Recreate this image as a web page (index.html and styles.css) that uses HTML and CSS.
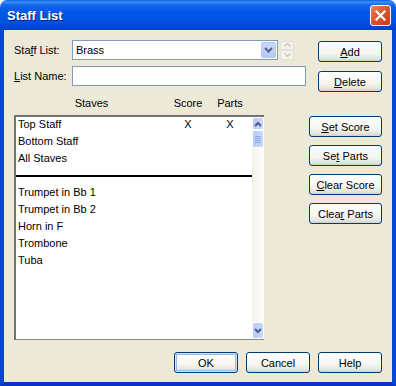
FILE: index.html
```html
<!DOCTYPE html>
<html lang="en">
  <head>
    <meta charset="UTF-8" />
    <title>Staff List</title>
    <link rel="stylesheet" href="styles.css">
  </head>
  <body>
    <div class="window">
      <div class="titlebar">
        <span class="title">Staff List</span>
        <span class="close">
          <svg width="11" height="11" viewBox="0 0 11 11"><path d="M1.5 1.5 L9.5 9.5 M9.5 1.5 L1.5 9.5" stroke="#fff" stroke-width="2.2" stroke-linecap="square"/></svg>
        </span>
      </div>

      <div class="frame">
        <div class="top">
          <div class="fields">
            <div class="field">
              <label class="lbl">Sta<u>f</u>f List:</label>
              <div class="combo">
                <span class="combo-text">Brass</span>
                <span class="combo-btn">
                  <svg width="9" height="6" viewBox="0 0 9 6"><path d="M1 1 L4.5 4.5 L8 1" fill="none" stroke="#4d6185" stroke-width="2"/></svg>
                </span>
              </div>
              <div class="spin">
                <span class="spin-part">
                  <svg width="7" height="4" viewBox="0 0 7 4"><path d="M0.5 3.5 L3.5 0.5 L6.5 3.5" fill="none" stroke="#c9c7ba" stroke-width="1.3"/></svg>
                </span>
                <span class="spin-part">
                  <svg width="7" height="4" viewBox="0 0 7 4"><path d="M0.5 0.5 L3.5 3.5 L6.5 0.5" fill="none" stroke="#c9c7ba" stroke-width="1.3"/></svg>
                </span>
              </div>
            </div>
            <div class="field name-field">
              <label class="lbl"><u>L</u>ist Name:</label>
              <div class="textbox"></div>
            </div>
          </div>
          <div class="side">
            <button class="btn"><u>A</u>dd</button>
            <button class="btn"><u>D</u>elete</button>
          </div>
        </div>

        <div class="cols">
          <span>Staves</span>
          <span>Score</span>
          <span>Parts</span>
        </div>

        <div class="middle">
          <div class="listbox">
            <div class="rows">
              <div class="row"><span class="name">Top Staff</span><span class="mark">X</span><span class="mark">X</span></div>
              <div class="row"><span class="name">Bottom Staff</span></div>
              <div class="row"><span class="name">All Staves</span></div>
              <div class="sep"></div>
              <div class="row"><span class="name">Trumpet in Bb 1</span></div>
              <div class="row"><span class="name">Trumpet in Bb 2</span></div>
              <div class="row"><span class="name">Horn in F</span></div>
              <div class="row"><span class="name">Trombone</span></div>
              <div class="row"><span class="name">Tuba</span></div>
            </div>
            <div class="vscroll">
              <span class="sb-btn">
                <svg width="8" height="6" viewBox="0 0 8 6"><path d="M1 5 L4 2 L7 5" fill="none" stroke="#4d6185" stroke-width="2"/></svg>
              </span>
              <span class="sb-thumb">
                <i></i><i></i><i></i><i></i>
              </span>
              <span class="sb-track"></span>
              <span class="sb-btn sb-down">
                <svg width="8" height="6" viewBox="0 0 8 6"><path d="M1 1 L4 4 L7 1" fill="none" stroke="#4d6185" stroke-width="2"/></svg>
              </span>
            </div>
          </div>

          <div class="actions">
            <button class="btn wide"><u>S</u>et Score</button>
            <button class="btn wide">Se<u>t</u> Parts</button>
            <button class="btn wide"><u>C</u>lear Score</button>
            <button class="btn wide">Clea<u>r</u> Parts</button>
          </div>
        </div>

        <div class="bottom">
          <button class="btn default">OK</button>
          <button class="btn">Cancel</button>
          <button class="btn">Help</button>
        </div>
      </div>
    </div>
  </body>
</html>
```

FILE: styles.css
```css
body {
  margin: 0;
  background-color: #ffffff;
  font-family: "Liberation Sans", Arial, sans-serif;
  font-size: 11px;
  color: #000000;
}

.window {
  width: 396px;
  height: 386px;
  display: flex;
  flex-direction: column;
}

.titlebar {
  height: 30px;
  display: flex;
  align-items: center;
  justify-content: space-between;
  padding: 0 5px 0 7px;
  border-radius: 7px 7px 0 0;
  background-image: linear-gradient(#0a5ee9 0px, #3d8ff7 2px, #1466eb 5px, #0058e6 12px, #0054e3 20px, #0048d6 26px, #003fc6 30px);
}

.title {
  font-size: 13px;
  font-weight: bold;
  color: #ffffff;
  text-shadow: 1px 1px #0a1883;
}

.close {
  width: 19px;
  height: 19px;
  border: 1px solid #ffffff;
  border-radius: 3px;
  background-image: linear-gradient(135deg, #e8815f, #d8532e 50%, #c2401c);
  display: flex;
  align-items: center;
  justify-content: center;
}

.frame {
  flex: 1;
  display: flex;
  flex-direction: column;
  background-color: #ece9d8;
  border-left: 4px solid #0846d8;
  border-right: 4px solid #0846d8;
  border-bottom: 4px solid #0834c4;
  padding: 10px 10px 0 10px;
}

.top {
  display: flex;
  justify-content: space-between;
  height: 52px;
}

.field {
  display: flex;
  align-items: center;
  height: 20px;
}

.name-field {
  margin-top: 6px;
}

.lbl {
  width: 58px;
}

.lbl u, .btn u {
  text-decoration: underline;
  text-underline-offset: 1px;
}

.combo {
  width: 204px;
  height: 18px;
  border: 1px solid #7f9db9;
  background-color: #ffffff;
  display: flex;
  align-items: center;
  justify-content: space-between;
}

.combo-text {
  padding-left: 3px;
}

.combo-btn {
  width: 15px;
  height: 16px;
  margin-right: 1px;
  border: 1px solid #b4c8f6;
  border-radius: 2px;
  box-sizing: border-box;
  background-image: linear-gradient(#c9d9fd, #b5c9f8);
  display: flex;
  align-items: center;
  justify-content: center;
}

.spin {
  width: 14px;
  height: 19px;
  margin-left: 2px;
  display: flex;
  flex-direction: column;
}

.spin-part {
  flex: 1;
  border: 1px solid #e4e2d6;
  background-color: #f3f2ea;
  display: flex;
  align-items: center;
  justify-content: center;
}

.textbox {
  width: 232px;
  height: 18px;
  border: 1px solid #7f9db9;
  background-color: #ffffff;
}

.side {
  display: flex;
  flex-direction: column;
  gap: 9px;
  padding-top: 1px;
}

.btn {
  width: 64px;
  height: 21px;
  padding: 0;
  font-family: "Liberation Sans", Arial, sans-serif;
  font-size: 11px;
  color: #000000;
  border: 1px solid #003c74;
  border-radius: 3px;
  background-image: linear-gradient(#ffffff, #f6f5f0 60%, #e8e6dc 85%, #d6d0c5);
}

.btn.wide {
  width: 73px;
}

.btn.default {
  box-shadow: inset 0 0 0 1px #cee7ff, inset 0 0 0 2px #98b8ea;
}

.cols {
  display: grid;
  grid-template-columns: 151px 42px 42px;
  margin: 4px 0 0 2px;
  height: 14px;
  line-height: 14px;
  text-align: center;
}

.middle {
  display: flex;
  justify-content: space-between;
  margin-top: 5px;
}

.listbox {
  width: 248px;
  height: 222px;
  border-top: 2px solid #74726a;
  border-left: 2px solid #74726a;
  border-bottom: 1px solid #8d8b80;
  background-color: #ffffff;
  display: flex;
}

.rows {
  width: 236px;
}

.row {
  display: grid;
  grid-template-columns: 151px 42px 42px;
  height: 17px;
  line-height: 15px;
}

.name {
  padding-left: 2px;
}

.mark {
  text-align: center;
}

.sep {
  height: 17px;
  background-image: linear-gradient(transparent 7px, #000000 7px, #000000 9px, transparent 9px);
}

.vscroll {
  width: 12px;
  display: flex;
  flex-direction: column;
  background-image: linear-gradient(90deg, #f3f1ec, #fefefb);
}

.sb-btn {
  height: 13px;
  border: 1px solid #ffffff;
  border-radius: 2px;
  box-sizing: border-box;
  background-image: linear-gradient(90deg, #b8cbf8, #c9d9fd);
  display: flex;
  align-items: center;
  justify-content: center;
}

.sb-down {
  height: 17px;
}

.sb-thumb {
  height: 18px;
  border: 1px solid #ffffff;
  border-radius: 2px;
  box-sizing: border-box;
  background-image: linear-gradient(90deg, #b8cbf8, #c9d9fd);
  display: flex;
  flex-direction: column;
  align-items: center;
  justify-content: center;
  gap: 1px;
}

.sb-thumb i {
  width: 6px;
  height: 1px;
  background-color: #8aa8ee;
}

.sb-track {
  flex: 1;
}

.actions {
  display: flex;
  flex-direction: column;
  gap: 8px;
  padding-top: 1px;
}

.bottom {
  display: flex;
  justify-content: flex-end;
  gap: 8px;
  margin-top: 12px;
}
```
